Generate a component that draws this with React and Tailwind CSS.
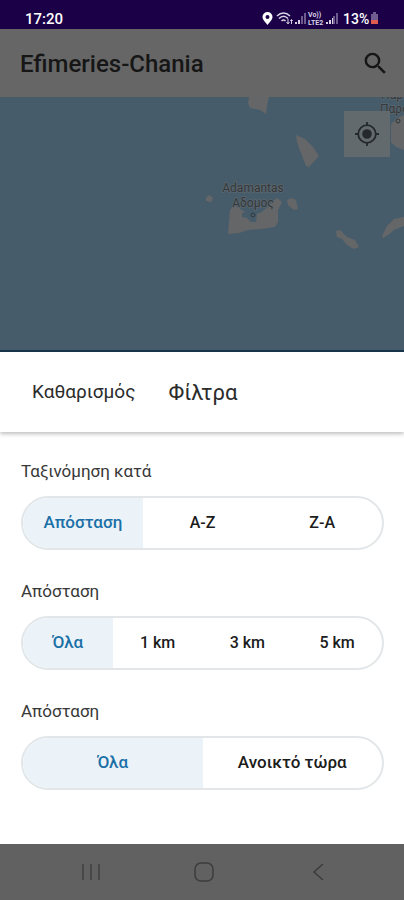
import { useState } from "react";

function StatusBar() {
  return (
    <div className="flex h-[29px] items-end bg-[#1b0048] pr-[26px] pl-[25px] text-white">
      <time className="flex-1 text-[15px] leading-5 font-medium">17:20</time>
      <svg viewBox="0 0 116 20" className="h-5 w-[116px]" aria-hidden="true">
        <path fillRule="evenodd" fill="#fff" d="M5.500 3a5 5 0 0 0-5 5c0 3 3 5 5 8 2-3 5-5 5-8a5 5 0 0 0-5-5Zm0 3a2 2 0 1 1 0 4 2 2 0 0 1 0-4Z" />
        <g fill="none" stroke="#d8d2e4" strokeWidth="1.500">
          <path d="M15 7c4-4 9-4 13 0M17 9.500c3-3 6-3 9 0M19.500 12c1.500-1.500 2.500-1.500 4 0" />
          <path d="M26 10v4M24.500 13l1.500 2 1.500-2M29.500 15v-4M28.300 12l1.200-1.500 1.200 1.500" strokeWidth="1" />
        </g>
        <path fill="#d8d2e4" d="M33 13h2v2h-2zM36 11h2v4h-2z" />
        <path fill="#6c5b8c" d="M39 7h2v8h-2zM42 4h2v11h-2z" />
        <text x="46" y="8" fontSize="7" fontWeight="700" fill="#d8d2e4">Vo))</text>
        <text x="46" y="16" fontSize="7" fontWeight="700" fill="#d8d2e4">LTE2</text>
        <path fill="#d8d2e4" d="M64 13h2v2h-2zM67 11h2v4h-2zM70 9h1v6h-1z" />
        <path fill="#6c5b8c" d="M71 7h2v8h-2zM74 4h2v11h-2z" />
        <text x="81" y="15" fontSize="14" fontWeight="500" fill="#fff">13%</text>
        <path fill="#705e91" d="M109 5h2V3h3v2h2v6h-7z" />
        <path fill="#e05b50" d="M109 11h7v4h-7z" />
      </svg>
    </div>
  );
}

function Header() {
  return (
    <header className="flex h-[68px] items-center justify-between bg-[#666] pr-[14px] pl-5 text-[#161616]">
      <h1 className="pt-[2px] text-2xl leading-7 font-medium">Efimeries-Chania</h1>
      <button type="button" aria-label="Αναζήτηση">
        <svg viewBox="0 0 24 24" className="size-[29px]" fill="currentColor" aria-hidden="true">
          <path d="M15.500 14h-.79l-.28-.27A6.470 6.470 0 0 0 16 9.500 6.500 6.500 0 1 0 9.500 16c1.610 0 3.090-.59 4.230-1.570l.27.28v.79l5 4.990L20.490 19l-4.990-5Zm-6 0a4.500 4.500 0 1 1 0-9 4.500 4.500 0 0 1 0 9Z" />
        </svg>
      </button>
    </header>
  );
}

function MapView() {
  return (
    <section aria-label="Χάρτης" className="relative h-[255px] overflow-hidden border-b-2 border-[#17334a] bg-[#465c6b]">
      <svg viewBox="202 97 202 255" className="absolute top-0 right-0 h-[255px] w-[202px]" aria-hidden="true">
        <g fill="#656667">
          <path d="M249 97h20l-2 9-1 8-6-4-10-2-2-5Z" />
          <path d="M296 135l9 4 8 8 6 9-10 11-3-1-7-18-2-6Z" />
          <path d="M230 210l4-5 8 5 8 5 10-2 8-6 5-6 4-3 5 4-4 8v12l-3 5-14 2-13 1-9 3-11 1Z" />
          <path d="M206 198l3-3 4 3-2 4-5-1Z" />
          <path d="M287 200l5-2 4 2 2 9-4 1-6-5Z" />
          <path d="M336 231l4-1 7 7 8 3 4 7-5 2-7-4-5-6-5-2Z" />
          <path d="M382 236l5-10 7-7 10-2v9l-10 4-6 5-5 3Z" />
          <path d="M391 124l6-6 7-3v35l-8-3-5-5Z" />
        </g>
        <path d="M242 213l8-2 7 3-1 8-5 0-4-4-5-1Z" fill="#465c6b" />
        <g fontSize="12" fill="#33383c" stroke="#5d666b" strokeWidth="1.500" paintOrder="stroke">
          <text x="253" y="192" textAnchor="middle">Adamantas</text>
          <text x="253" y="207" textAnchor="middle">Αδομος</text>
          <text x="381" y="99">Παρ</text>
          <text x="380" y="113">Παρο</text>
        </g>
        <g fill="none" stroke="#33383c">
          <circle cx="253" cy="215" r="2" />
          <circle cx="398" cy="121" r="2" />
        </g>
      </svg>
      <button type="button" aria-label="Η τοποθεσία μου" className="absolute top-[14px] right-[14px] grid size-[46px] place-items-center bg-[#626a6e] text-[#25292c]">
        <svg viewBox="0 0 24 24" className="size-6" fill="none" stroke="currentColor" strokeWidth="1.800" aria-hidden="true">
          <circle cx="12" cy="12" r="8.800" />
          <circle cx="12" cy="12" r="4.800" fill="currentColor" stroke="none" />
          <path d="M12 0v3M12 21v3M0 12h3M21 12h3" />
        </svg>
      </button>
    </section>
  );
}

const isLatin = (text) => /^[A-Z0-9]/.test(text);

function Segmented({ name, label, options, columns }) {
  const [value, setValue] = useState(options[0]);
  return (
    <fieldset>
      <legend className="text-[17px] leading-5 text-[#383838]">{label}</legend>
      <div className={`mt-[15px] grid h-[54px] overflow-hidden rounded-full border-2 border-[#e2e6e8] ${columns}`}>
        {options.map((option) => (
          <label
            key={option}
            className={`grid cursor-pointer place-items-center font-medium text-[#1c1c1c] has-checked:bg-[#ecf3f8] has-checked:text-[#1b70a7] ${isLatin(option) ? "text-base" : "text-[17px]"}`}
          >
            <input
              type="radio"
              name={name}
              value={option}
              checked={value === option}
              onChange={() => setValue(option)}
              className="sr-only"
            />
            {option}
          </label>
        ))}
      </div>
    </fieldset>
  );
}

function FilterSheet() {
  return (
    <main className="flex-1 bg-white">
      <div className="flex h-20 items-center gap-[33px] pl-8 text-[#2c2c2c] shadow-[0_2px_4px_rgba(0,0,0,0.25)]">
        <button type="button" className="text-[19px]">Καθαρισμός</button>
        <h2 className="text-[22px]">Φίλτρα</h2>
      </div>
      <form className="flex flex-col gap-[31px] pt-[29px] pr-5 pb-[54px] pl-[21px]">
        <Segmented name="sort" label="Ταξινόμηση κατά" options={["Απόσταση", "A-Z", "Z-A"]} columns="grid-cols-3" />
        <Segmented name="distance" label="Απόσταση" options={["Όλα", "1 km", "3 km", "5 km"]} columns="grid-cols-4" />
        <Segmented name="open" label="Απόσταση" options={["Όλα", "Ανοικτό τώρα"]} columns="grid-cols-2" />
      </form>
    </main>
  );
}

function NavigationBar() {
  return (
    <nav aria-label="Πλοήγηση" className="grid h-14 grid-cols-[1fr_46px_1fr] items-center bg-[#616161] text-[#3c3c3c]">
      <button type="button" aria-label="Πρόσφατα" className="justify-self-end pr-[78px]">
        <svg viewBox="0 0 20 20" className="size-5" fill="none" stroke="#484848" strokeWidth="2" aria-hidden="true">
          <path d="M2 2v16M10 2v16M18 2v16" />
        </svg>
      </button>
      <button type="button" aria-label="Αρχική" className="justify-self-center pl-1">
        <svg viewBox="0 0 20 20" className="size-5" fill="none" stroke="currentColor" strokeWidth="1.500" aria-hidden="true">
          <rect x="1" y="1" width="18" height="18" rx="6" />
        </svg>
      </button>
      <button type="button" aria-label="Πίσω" className="justify-self-start pl-[84px]">
        <svg viewBox="0 0 20 20" className="size-5" fill="none" stroke="currentColor" strokeWidth="1.500" aria-hidden="true">
          <path d="M14 2 5 10l9 8" />
        </svg>
      </button>
    </nav>
  );
}

export default function App() {
  return (
    <div className="flex min-h-screen flex-col bg-white font-[Roboto,'Noto_Sans',sans-serif]">
      <StatusBar />
      <Header />
      <MapView />
      <FilterSheet />
      <NavigationBar />
    </div>
  );
}
